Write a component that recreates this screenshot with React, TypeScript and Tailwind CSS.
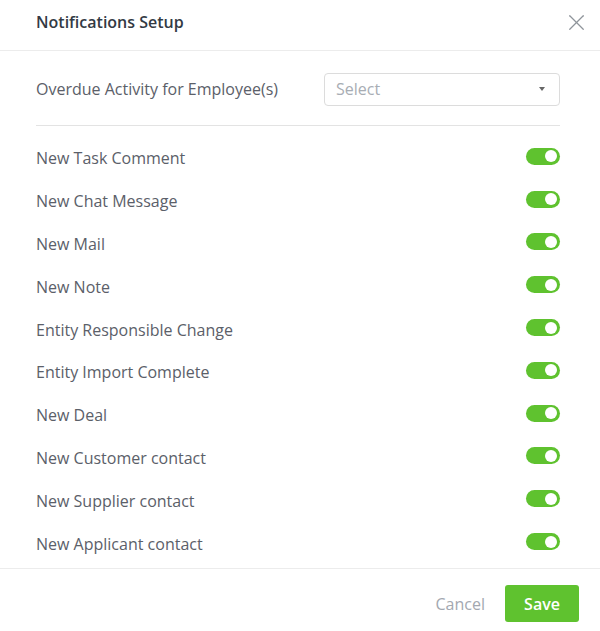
import { X } from "lucide-react"

const items = [
  "New Task Comment",
  "New Chat Message",
  "New Mail",
  "New Note",
  "Entity Responsible Change",
  "Entity Import Complete",
  "New Deal",
  "New Customer contact",
  "New Supplier contact",
  "New Applicant contact",
]

function Toggle() {
  return (
    <div className="mb-[4px] flex h-[17px] w-[34px] items-center justify-end rounded-full bg-[#5fc22f] pr-[3px]">
      <div className="h-[12px] w-[12px] rounded-full bg-white" />
    </div>
  )
}

export default function App() {
  return (
    <div className="flex h-[631px] w-[600px] flex-col bg-white font-['Open_Sans',sans-serif]">
      {/* Header */}
      <div className="flex h-[51px] items-center justify-between border-b border-[#ececec] pb-[6px] pl-9 pr-[10px]">
        <h2 className="text-[16px] font-semibold text-[#333a44]">Notifications Setup</h2>
        <X className="size-[27px] text-[#8f949b]" strokeWidth={1.1} />
      </div>

      {/* Body */}
      <div className="flex-1 pl-9 pr-[40px]">
        <div className="flex h-[75px] items-center justify-between border-b border-[#e3e3e3] pt-[2px]">
          <span className="text-[16px] text-[#5b6069]">Overdue Activity for Employee(s)</span>
          <div className="flex h-[33px] w-[236px] items-center justify-between rounded-[4px] border border-[#dcdcdc] pl-[11px] pr-[14px]">
            <span className="text-[16px] text-[#a8adb4]">Select</span>
            <span className="h-0 w-0 border-x-[3px] border-t-[4px] border-x-transparent border-t-[#666]" />
          </div>
        </div>
        <div className="flex flex-col pt-[11px]">
          {items.map((label) => (
            <div key={label} className="flex h-[42.8px] items-center justify-between">
              <span className="text-[16px] text-[#5b6069]">{label}</span>
              <Toggle />
            </div>
          ))}
        </div>
      </div>

      {/* Footer */}
      <div className="flex h-[63px] items-center justify-end gap-[20px] border-t border-[#ececec] pr-[21px] pt-[7px]">
        <button className="text-[16px] font-medium text-[#a3a8b0]">Cancel</button>
        <button className="h-[37px] w-[74px] rounded-[3px] bg-[#5fc22f] text-[16px] font-semibold text-white">
          Save
        </button>
      </div>
    </div>
  )
}
